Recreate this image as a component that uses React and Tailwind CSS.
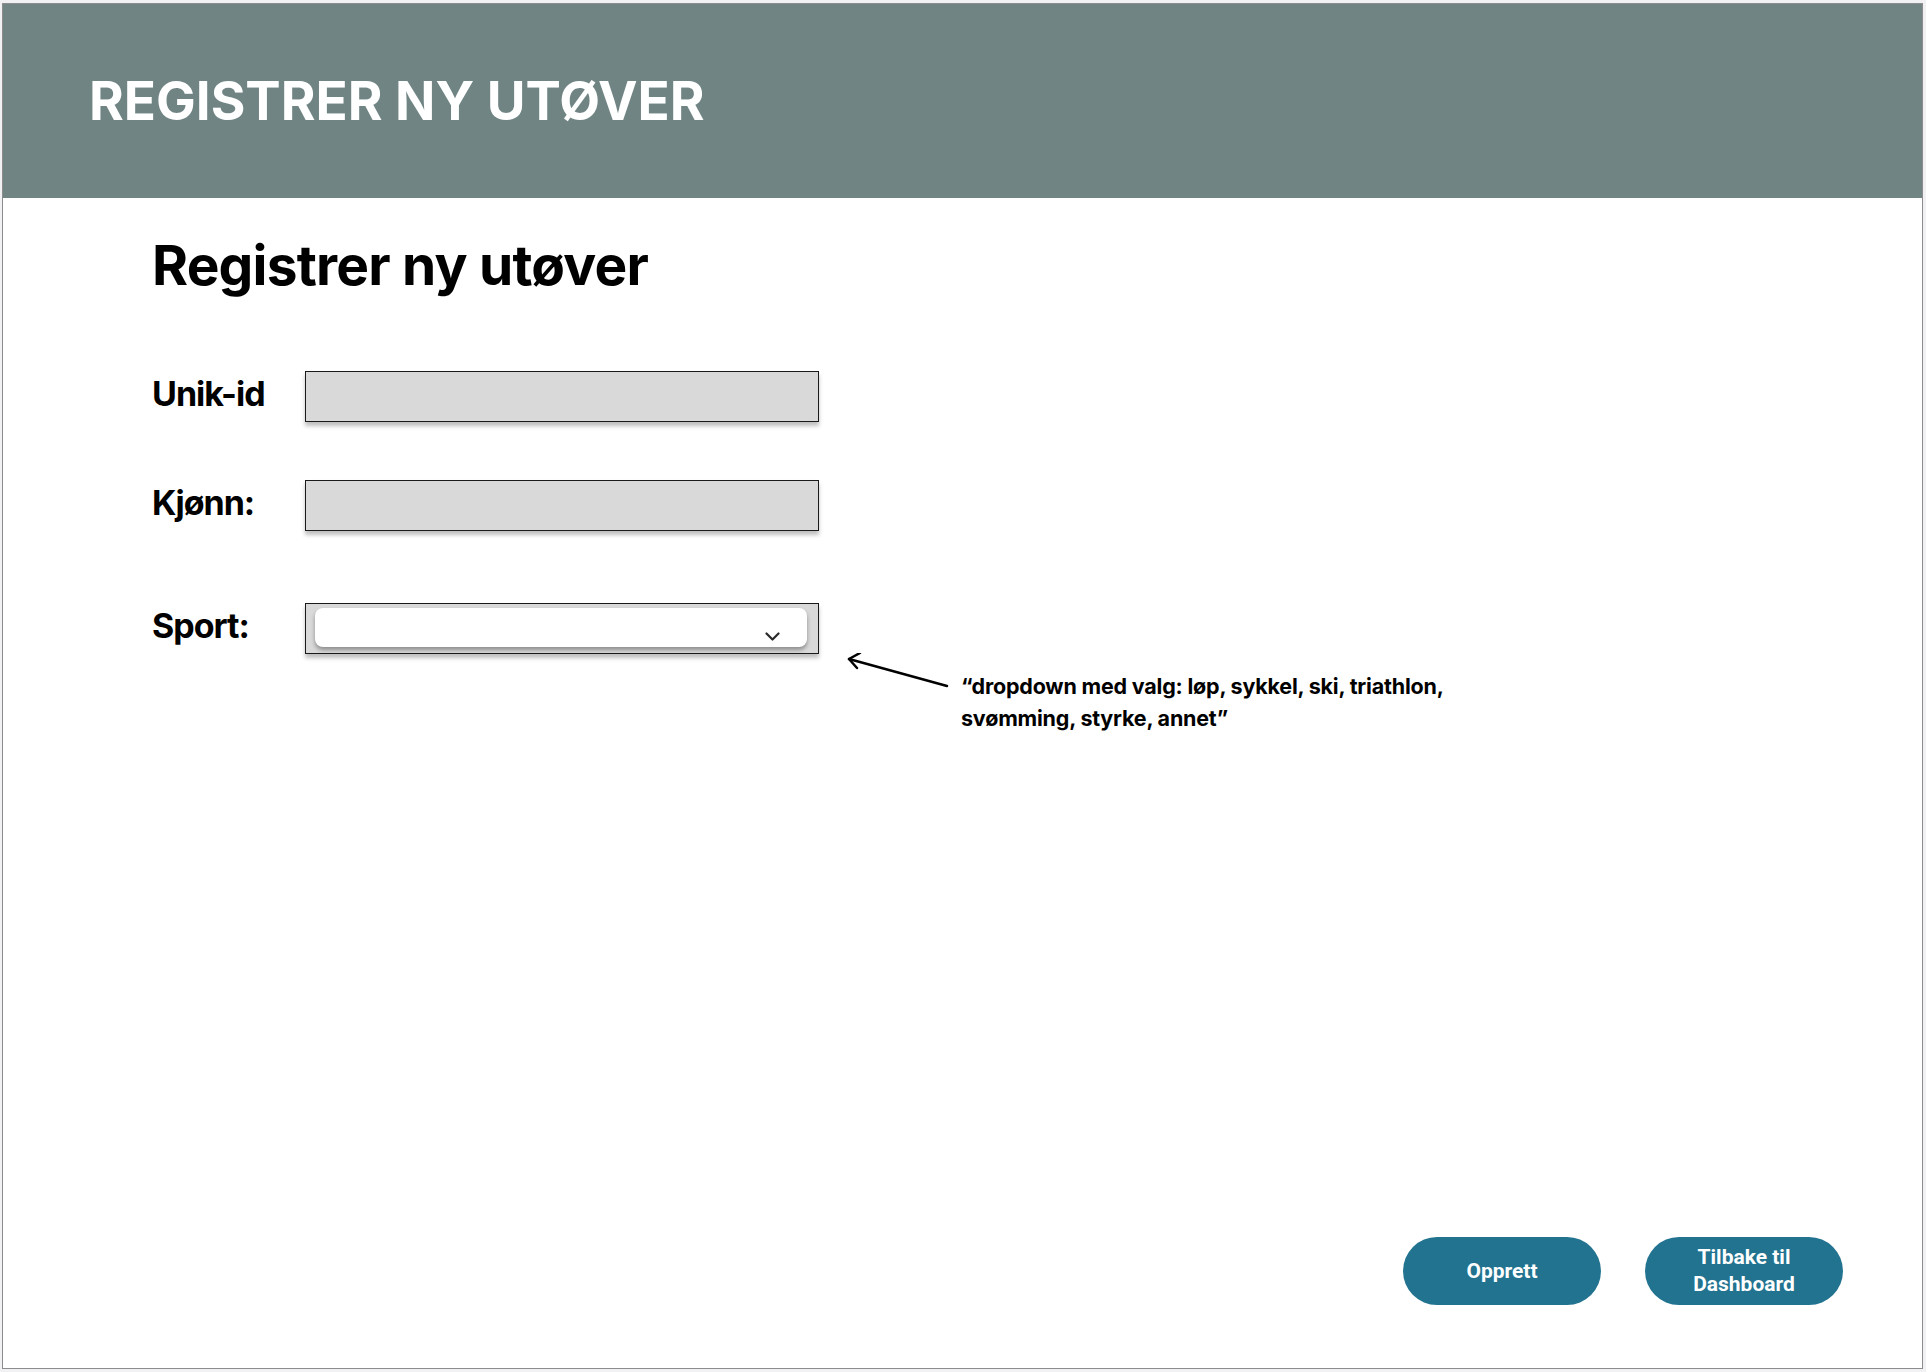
import React from "react";

const inter = { fontFamily: "Inter, 'Noto Sans', sans-serif" };
const roboto = { fontFamily: "Roboto, 'Liberation Sans', sans-serif" };

const FieldRow = ({ label, children, className = "" }) => (
    <div className={`flex items-start ${className}`}>
        <div className="w-[153px] shrink-0 mt-[6px] text-[34px] leading-none font-bold tracking-[-1px] text-black">
            {label}
        </div>
        {children}
    </div>
);

const GreyInput = () => (
    <div className="w-[514px] h-[51px] shrink-0 bg-[#d9d9d9] border-[1.5px] border-[#1a1a1a] shadow-[0_4px_4px_rgba(0,0,0,0.25)]" />
);

const App = () => {
    return (
        <div className="min-h-screen bg-[#f1f1f4] pt-[3px] pl-[2px]" style={inter}>
            <div className="w-[1921px] h-[1366px] bg-white border border-[#8c8c8c] flex flex-col">
                {/* Header */}
                <header className="h-[194px] bg-[#718484] flex items-center pl-[86px]">
                    <h1 className="text-[53px] leading-none font-bold text-white">
                        REGISTRER NY UTØVER
                    </h1>
                </header>

                {/* Form */}
                <main className="flex-1 flex flex-col pl-[149px]">
                    <h2 className="mt-[40px] text-[55px] leading-none font-bold tracking-[-0.8px] text-black">
                        Registrer ny utøver
                    </h2>

                    <FieldRow label="Unik-id" className="mt-[78px]">
                        <GreyInput />
                    </FieldRow>

                    <FieldRow label="Kjønn:" className="mt-[58px]">
                        <GreyInput />
                    </FieldRow>

                    <FieldRow label="Sport:" className="mt-[72px]">
                        <div className="w-[514px] h-[51px] shrink-0 bg-[#d9d9d9] border-[1.5px] border-[#1a1a1a] shadow-[0_4px_4px_rgba(0,0,0,0.25)] pl-[8.5px] pr-[11.5px] pt-[3.5px]">
                            <div className="h-[39px] bg-white rounded-[8px] shadow-[0_3px_4px_rgba(0,0,0,0.35)] flex items-end justify-end pr-[27px] pb-[6px]">
                                <svg
                                    width="15"
                                    height="9"
                                    viewBox="0 0 15 9"
                                    fill="none"
                                    stroke="#2a2a2a"
                                    strokeWidth="2.2"
                                    strokeLinecap="round"
                                    strokeLinejoin="round"
                                >
                                    <path d="M1.5 1.5 L7.5 7.5 L13.5 1.5" />
                                </svg>
                            </div>
                        </div>
                        <svg
                            width="104"
                            height="36"
                            viewBox="0 0 104 36"
                            className="ml-[27px] mt-[50px] shrink-0"
                            fill="none"
                            stroke="#000"
                            strokeWidth="2.5"
                            strokeLinecap="round"
                            strokeLinejoin="round"
                        >
                            <path d="M101 33 L3 6" />
                            <path d="M14 0 L3 6 L11 15" />
                        </svg>
                        <p className="ml-[11px] mt-[67px] text-[21.5px] leading-[32px] font-bold tracking-[-0.2px] text-black whitespace-nowrap">
                            “dropdown med valg: løp, sykkel, ski, triathlon,
                            <br />
                            svømming, styrke, annet”
                        </p>
                    </FieldRow>

                    {/* Buttons */}
                    <div className="mt-auto flex justify-end gap-[44px] pr-[79px] pb-[63px]">
                        <button
                            type="button"
                            className="w-[198px] h-[68px] rounded-full bg-[#21738f] text-white text-[21px] leading-[27px] font-bold"
                            style={roboto}
                        >
                            Opprett
                        </button>
                        <button
                            type="button"
                            className="w-[198px] h-[68px] rounded-full bg-[#21738f] text-white text-[21px] leading-[27px] font-bold"
                            style={roboto}
                        >
                            Tilbake til
                            <br />
                            Dashboard
                        </button>
                    </div>
                </main>
            </div>
        </div>
    );
};

export default App;
